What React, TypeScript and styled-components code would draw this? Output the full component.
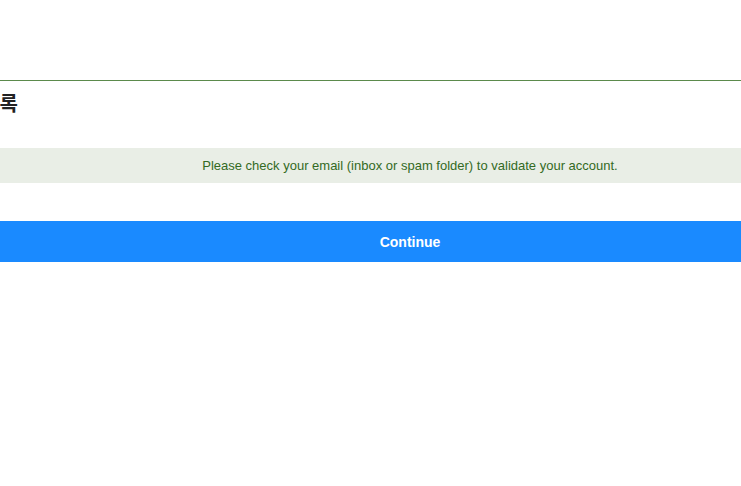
import React from "react";
import styled, { createGlobalStyle } from "styled-components";

const Global = createGlobalStyle`
  html, body { margin: 0; padding: 0; background: #ffffff; overflow: hidden; }
  body { font-family: "Liberation Sans", Arial, "Noto Sans CJK KR", sans-serif; }
`;

const Page = styled.div`
  width: 860px;
  margin-left: -20px;
  display: flex;
  flex-direction: column;
`;

const Header = styled.header`
  height: 80px;
  border-bottom: 1px solid #5b8a4c;
`;

const Title = styled.h1`
  margin: 0;
  padding-top: 10px;
  padding-left: 1px;
  height: 55px;
  box-sizing: border-box;
  font-size: 20px;
  line-height: 24px;
  font-weight: 600;
  color: #222222;
  font-family: "Noto Sans CJK KR", "Liberation Sans", sans-serif;
`;

const Notice = styled.div`
  margin-top: 12px;
  height: 35px;
  background: #e9eee6;
  color: #336a24;
  font-size: 13px;
  display: flex;
  align-items: center;
  justify-content: center;
`;

const Button = styled.button`
  margin-top: 38px;
  height: 41px;
  border: none;
  background: #1a8aff;
  color: #ffffff;
  font-family: "Liberation Sans", Arial, sans-serif;
  font-size: 14px;
  font-weight: 700;
  cursor: pointer;
`;

export default function App() {
  return (
    <>
      <Global />
      <Page>
        <Header />
        <Title>등록</Title>
        <Notice>Please check your email (inbox or spam folder) to validate your account.</Notice>
        <Button>Continue</Button>
      </Page>
    </>
  );
}
